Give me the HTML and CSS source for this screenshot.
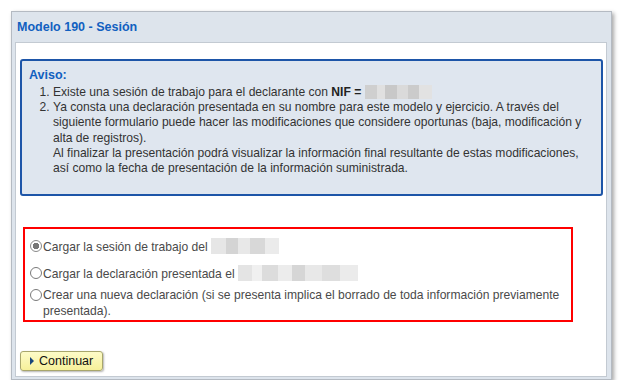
FILE: index.html
```html
<!DOCTYPE html>
<html lang="es">
<head>
    <meta charset="UTF-8">
    <title>Modelo 190 - Sesión</title>
    <link rel="stylesheet" href="styles.css">
</head>
<body>
    <div class="window">
        <div class="window-title">Modelo 190 - Sesión</div>
        <div class="window-body">
            <div class="aviso">
                <div class="aviso-title">Aviso:</div>
                <ol class="aviso-list">
                    <li>Existe una sesión de trabajo para el declarante con <b>NIF =</b> <span class="blur blur-nif"></span></li>
                    <li>Ya consta una declaración presentada en su nombre para este modelo y ejercicio. A través del siguiente formulario puede hacer las modificaciones que considere oportunas (baja, modificación y alta de registros).<br>Al finalizar la presentación podrá visualizar la información final resultante de estas modificaciones, así como la fecha de presentación de la información suministrada.</li>
                </ol>
            </div>

            <div class="options">
                <label class="option option-first">
                    <input type="radio" name="accion" checked>
                    <span>Cargar la sesión de trabajo del <span class="blur blur-date"></span></span>
                </label>
                <label class="option">
                    <input type="radio" name="accion">
                    <span>Cargar la declaración presentada el <span class="blur blur-long"></span></span>
                </label>
                <label class="option">
                    <input type="radio" name="accion">
                    <span>Crear una nueva declaración (si se presenta implica el borrado de toda información previamente presentada).</span>
                </label>
            </div>

            <button class="btn-continuar"><span class="arrow"></span>Continuar</button>
        </div>
    </div>
</body>
</html>
```

FILE: styles.css
```css
body {
    margin: 0;
    background: #fff;
    font-family: "Liberation Sans", Arial, sans-serif;
    font-size: 12.1px;
    color: #333;
}
.window {
    margin: 11px 0 0 11px;
    width: 601px;
    box-sizing: border-box;
    border: 1px solid #b4bac2;
    background: #dde4ec;
    padding: 0 4px 2px 3px;
    box-shadow: 2px 2px 4px rgba(0, 0, 0, 0.35);
}
.window-title {
    height: 30px;
    line-height: 30px;
    padding-left: 2px;
    font-weight: bold;
    font-size: 12.5px;
    color: #1160c0;
}
.window-body {
    background: #fff;
    border: 1px solid #c3cad2;
    padding: 16px 0 5px 4px;
}
.aviso {
    width: 583px;
    box-sizing: border-box;
    border: 2px solid #1d55a8;
    border-radius: 3px;
    background: #dfe6ef;
    padding: 6px 7px 18px;
}
.aviso-title {
    font-weight: bold;
    font-size: 12.5px;
    color: #1160c0;
    line-height: 16px;
    margin-bottom: 2px;
}
.aviso-list {
    margin: 0;
    padding-left: 24px;
    line-height: 15.2px;
}
.aviso-list b {
    color: #222;
}
.blur {
    display: inline-block;
    vertical-align: -3px;
    height: 14px;
    background: linear-gradient(90deg, #cfcfcf 0 18%, #e0e0e0 18% 30%, #c8c8c8 30% 48%, #dadada 48% 64%, #cbcbcb 64% 80%, #e2e2e2 80%);
}
.blur-nif {
    width: 67px;
}
.blur-date {
    width: 68px;
    height: 16px;
    background: linear-gradient(90deg, #e6e6e6 0 22%, #d4d4d4 22% 40%, #e8e8e8 40% 58%, #d8d8d8 58% 80%, #ebebeb 80%);
}
.blur-long {
    width: 120px;
    height: 16px;
    background: linear-gradient(90deg, #e4e4e4 0 12%, #f0f0f0 12% 20%, #dcdcdc 20% 33%, #ececec 33% 45%, #d6d6d6 45% 56%, #e8e8e8 56% 70%, #dedede 70% 85%, #ebebeb 85%);
}
.options {
    width: 550px;
    box-sizing: border-box;
    margin: 31px 0 0 3px;
    border: 2px solid #f00;
    padding: 9px 6px 1px 5px;
    color: #4a4a4a;
}
.option {
    display: flex;
    align-items: flex-start;
    line-height: 16px;
    margin-top: 5px;
}
.option-first {
    margin-top: 0;
    margin-bottom: 10px;
}
.option input {
    appearance: none;
    margin: 2px 1px 0 0;
    width: 12px;
    height: 12px;
    flex: none;
    border: 1px solid #7a7a7a;
    border-radius: 50%;
    background: #fff;
    box-sizing: border-box;
}
.option input:checked {
    background: radial-gradient(circle, #777 0 3px, #fff 3.5px);
    border-color: #8a8a8a;
}
.btn-continuar {
    margin: 29px 0 0 0;
    height: 20px;
    width: 83px;
    padding: 0 0 0 9px;
    text-align: left;
    font-family: inherit;
    font-size: 12.5px;
    color: #111;
    background: linear-gradient(#fdfbc8, #f6f09a);
    border: 1px solid #a8a66c;
    border-radius: 3px;
    box-shadow: 1px 1px 2px rgba(0, 0, 0, 0.3);
}
.arrow {
    display: inline-block;
    width: 0;
    height: 0;
    border-top: 4px solid transparent;
    border-bottom: 4px solid transparent;
    border-left: 4px solid #17457a;
    margin-right: 5px;
    vertical-align: 0;
}
```
